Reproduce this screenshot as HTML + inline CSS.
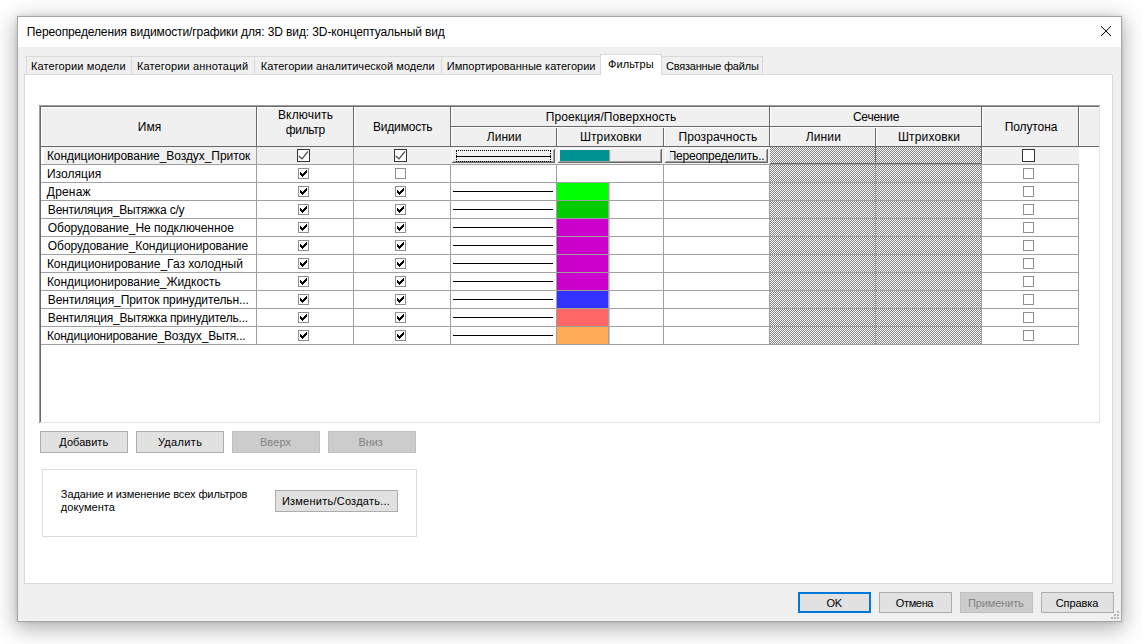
<!DOCTYPE html>
<html lang="ru"><head><meta charset="utf-8"><title>Переопределения видимости/графики</title>
<style>
html,body{margin:0;padding:0;background:#fff}
body{width:1143px;height:644px;position:relative;overflow:hidden;font-family:"Liberation Sans", sans-serif}
#w div,#w svg,#w span{position:absolute;display:block}
#w span{white-space:nowrap}
</style></head><body><div id="w">
<div style="left:17px;top:16px;width:1105px;height:606px;background:#f0f0f0;border:1px solid #a6a6a6;box-sizing:border-box;box-shadow:0 5px 20px 2px rgba(0,0,0,.30), 0 0 4px rgba(0,0,0,.12)"></div>
<div style="left:18px;top:17px;width:1103px;height:30px;background:#fff"></div>
<div style="left:24px;top:74px;width:1089px;height:510px;background:#fff;border:1px solid #d9d9d9;box-sizing:border-box"></div>
<div style="left:26px;top:56px;width:106px;height:18px;background:#f0f0f0;border:1px solid #d9d9d9;border-bottom:none;box-sizing:border-box"></div>
<div style="left:131px;top:56px;width:124px;height:18px;background:#f0f0f0;border:1px solid #d9d9d9;border-bottom:none;box-sizing:border-box"></div>
<div style="left:254px;top:56px;width:188px;height:18px;background:#f0f0f0;border:1px solid #d9d9d9;border-bottom:none;box-sizing:border-box"></div>
<div style="left:441px;top:56px;width:160px;height:18px;background:#f0f0f0;border:1px solid #d9d9d9;border-bottom:none;box-sizing:border-box"></div>
<div style="left:661px;top:56px;width:102px;height:18px;background:#f0f0f0;border:1px solid #d9d9d9;border-bottom:none;box-sizing:border-box"></div>
<div style="left:600px;top:54px;width:62px;height:21px;background:#fff;border:1px solid #d9d9d9;border-bottom:none;box-sizing:border-box"></div>
<div style="left:39px;top:105px;width:1061px;height:318px;background:#fff"></div>
<div style="left:39px;top:105px;width:1061px;height:1px;background:#a0a0a0"></div>
<div style="left:39px;top:105px;width:1px;height:318px;background:#a0a0a0"></div>
<div style="left:40px;top:106px;width:1059px;height:1px;background:#696969"></div>
<div style="left:40px;top:106px;width:1px;height:316px;background:#696969"></div>
<div style="left:40px;top:422px;width:1060px;height:1px;background:#e3e3e3"></div>
<div style="left:1099px;top:106px;width:1px;height:317px;background:#e3e3e3"></div>
<div style="left:41px;top:107px;width:1058px;height:39px;background:#f0f0f0"></div>
<div style="left:41px;top:107px;width:1058px;height:1px;background:#fff"></div>
<div style="left:41px;top:107px;width:1px;height:39px;background:#fff"></div>
<div style="left:41px;top:146px;width:1058px;height:1px;background:#696969"></div>
<div style="left:256px;top:107px;width:1px;height:40px;background:#696969"></div>
<div style="left:257px;top:108px;width:1px;height:38px;background:#fff"></div>
<div style="left:353px;top:107px;width:1px;height:40px;background:#696969"></div>
<div style="left:354px;top:108px;width:1px;height:38px;background:#fff"></div>
<div style="left:450px;top:107px;width:1px;height:40px;background:#696969"></div>
<div style="left:451px;top:108px;width:1px;height:38px;background:#fff"></div>
<div style="left:556px;top:127px;width:1px;height:20px;background:#696969"></div>
<div style="left:557px;top:127px;width:1px;height:19px;background:#fff"></div>
<div style="left:663px;top:127px;width:1px;height:20px;background:#696969"></div>
<div style="left:664px;top:127px;width:1px;height:19px;background:#fff"></div>
<div style="left:769px;top:107px;width:1px;height:40px;background:#696969"></div>
<div style="left:770px;top:108px;width:1px;height:38px;background:#fff"></div>
<div style="left:875px;top:127px;width:1px;height:20px;background:#696969"></div>
<div style="left:876px;top:127px;width:1px;height:19px;background:#fff"></div>
<div style="left:981px;top:107px;width:1px;height:40px;background:#696969"></div>
<div style="left:982px;top:108px;width:1px;height:38px;background:#fff"></div>
<div style="left:1078px;top:107px;width:1px;height:40px;background:#696969"></div>
<div style="left:1079px;top:108px;width:1px;height:38px;background:#fff"></div>
<div style="left:451px;top:126px;width:318px;height:1px;background:#696969"></div>
<div style="left:451px;top:127px;width:318px;height:1px;background:#fff"></div>
<div style="left:770px;top:126px;width:211px;height:1px;background:#696969"></div>
<div style="left:770px;top:127px;width:211px;height:1px;background:#fff"></div>
<div style="left:41px;top:164px;width:1038px;height:1px;background:#a0a0a0"></div>
<div style="left:41px;top:182px;width:1038px;height:1px;background:#a0a0a0"></div>
<div style="left:41px;top:200px;width:1038px;height:1px;background:#a0a0a0"></div>
<div style="left:41px;top:218px;width:1038px;height:1px;background:#a0a0a0"></div>
<div style="left:41px;top:236px;width:1038px;height:1px;background:#a0a0a0"></div>
<div style="left:41px;top:254px;width:1038px;height:1px;background:#a0a0a0"></div>
<div style="left:41px;top:272px;width:1038px;height:1px;background:#a0a0a0"></div>
<div style="left:41px;top:290px;width:1038px;height:1px;background:#a0a0a0"></div>
<div style="left:41px;top:308px;width:1038px;height:1px;background:#a0a0a0"></div>
<div style="left:41px;top:326px;width:1038px;height:1px;background:#a0a0a0"></div>
<div style="left:41px;top:344px;width:1038px;height:1px;background:#a0a0a0"></div>
<div style="left:256px;top:147px;width:1px;height:198px;background:#a0a0a0"></div>
<div style="left:353px;top:147px;width:1px;height:198px;background:#a0a0a0"></div>
<div style="left:450px;top:147px;width:1px;height:198px;background:#a0a0a0"></div>
<div style="left:556px;top:147px;width:1px;height:198px;background:#a0a0a0"></div>
<div style="left:663px;top:147px;width:1px;height:198px;background:#a0a0a0"></div>
<div style="left:769px;top:147px;width:1px;height:198px;background:#a0a0a0"></div>
<div style="left:875px;top:147px;width:1px;height:198px;background:#a0a0a0"></div>
<div style="left:981px;top:147px;width:1px;height:198px;background:#a0a0a0"></div>
<div style="left:1078px;top:147px;width:1px;height:198px;background:#a0a0a0"></div>
<div style="left:41px;top:147px;width:1038px;height:17px;background:#f0f0f0"></div>
<div style="left:256px;top:147px;width:1px;height:17px;background:#a0a0a0"></div>
<div style="left:353px;top:147px;width:1px;height:17px;background:#a0a0a0"></div>
<div style="left:41px;top:147px;width:3px;height:17px;background:#fff"></div>
<div style="left:770px;top:147px;width:211px;height:197px;background:#fff"></div>
<svg style="left:770px;top:147px" width="211" height="197"><defs><pattern id="ck" width="2" height="2" patternUnits="userSpaceOnUse"><rect width="2" height="2" fill="#fff"/><rect x="0" y="0" width="1" height="1" fill="#808080"/><rect x="1" y="1" width="1" height="1" fill="#808080"/></pattern></defs><rect width="211" height="197" fill="url(#ck)"/></svg>
<div style="left:770px;top:164px;width:212px;height:1px;background:#a0a0a0"></div>
<div style="left:770px;top:182px;width:212px;height:1px;background:#a0a0a0"></div>
<div style="left:770px;top:200px;width:212px;height:1px;background:#a0a0a0"></div>
<div style="left:770px;top:218px;width:212px;height:1px;background:#a0a0a0"></div>
<div style="left:770px;top:236px;width:212px;height:1px;background:#a0a0a0"></div>
<div style="left:770px;top:254px;width:212px;height:1px;background:#a0a0a0"></div>
<div style="left:770px;top:272px;width:212px;height:1px;background:#a0a0a0"></div>
<div style="left:770px;top:290px;width:212px;height:1px;background:#a0a0a0"></div>
<div style="left:770px;top:308px;width:212px;height:1px;background:#a0a0a0"></div>
<div style="left:770px;top:326px;width:212px;height:1px;background:#a0a0a0"></div>
<div style="left:770px;top:344px;width:212px;height:1px;background:#a0a0a0"></div>
<div style="left:875px;top:147px;width:1px;height:198px;background:#a0a0a0"></div>
<div style="left:875px;top:147px;width:1px;height:17px;background:#696969"></div>
<div style="left:981px;top:147px;width:1px;height:198px;background:#a0a0a0"></div>
<div style="left:981px;top:147px;width:1px;height:17px;background:#696969"></div>
<div style="left:770px;top:163px;width:212px;height:1px;background:#696969"></div>
<div style="left:982px;top:147px;width:1px;height:17px;background:#fff"></div>
<div style="left:557px;top:183px;width:51px;height:17px;background:#00ff00"></div>
<div style="left:608px;top:183px;width:1px;height:17px;background:#a0a0a0"></div>
<div style="left:609px;top:183px;width:1px;height:17px;background:#c8c8c8"></div>
<div style="left:557px;top:201px;width:51px;height:17px;background:#00cc00"></div>
<div style="left:608px;top:201px;width:1px;height:17px;background:#a0a0a0"></div>
<div style="left:609px;top:201px;width:1px;height:17px;background:#c8c8c8"></div>
<div style="left:557px;top:219px;width:51px;height:17px;background:#cc00cc"></div>
<div style="left:608px;top:219px;width:1px;height:17px;background:#a0a0a0"></div>
<div style="left:609px;top:219px;width:1px;height:17px;background:#c8c8c8"></div>
<div style="left:557px;top:237px;width:51px;height:17px;background:#cc00cc"></div>
<div style="left:608px;top:237px;width:1px;height:17px;background:#a0a0a0"></div>
<div style="left:609px;top:237px;width:1px;height:17px;background:#c8c8c8"></div>
<div style="left:557px;top:255px;width:51px;height:17px;background:#cc00cc"></div>
<div style="left:608px;top:255px;width:1px;height:17px;background:#a0a0a0"></div>
<div style="left:609px;top:255px;width:1px;height:17px;background:#c8c8c8"></div>
<div style="left:557px;top:273px;width:51px;height:17px;background:#cc00cc"></div>
<div style="left:608px;top:273px;width:1px;height:17px;background:#a0a0a0"></div>
<div style="left:609px;top:273px;width:1px;height:17px;background:#c8c8c8"></div>
<div style="left:557px;top:291px;width:51px;height:17px;background:#3333ff"></div>
<div style="left:608px;top:291px;width:1px;height:17px;background:#a0a0a0"></div>
<div style="left:609px;top:291px;width:1px;height:17px;background:#c8c8c8"></div>
<div style="left:557px;top:309px;width:51px;height:17px;background:#ff6666"></div>
<div style="left:608px;top:309px;width:1px;height:17px;background:#a0a0a0"></div>
<div style="left:609px;top:309px;width:1px;height:17px;background:#c8c8c8"></div>
<div style="left:557px;top:327px;width:51px;height:17px;background:#ffaa55"></div>
<div style="left:608px;top:327px;width:1px;height:17px;background:#a0a0a0"></div>
<div style="left:609px;top:327px;width:1px;height:17px;background:#c8c8c8"></div>
<div style="left:453px;top:191px;width:100px;height:1px;background:#000"></div>
<div style="left:453px;top:209px;width:100px;height:1px;background:#000"></div>
<div style="left:453px;top:227px;width:100px;height:1px;background:#000"></div>
<div style="left:453px;top:245px;width:100px;height:1px;background:#000"></div>
<div style="left:453px;top:263px;width:100px;height:1px;background:#000"></div>
<div style="left:453px;top:281px;width:100px;height:1px;background:#000"></div>
<div style="left:453px;top:299px;width:100px;height:1px;background:#000"></div>
<div style="left:453px;top:317px;width:100px;height:1px;background:#000"></div>
<div style="left:453px;top:335px;width:100px;height:1px;background:#000"></div>
<div style="left:452px;top:148px;width:103px;height:15px;background:#f0f0f0"></div>
<div style="left:452px;top:148px;width:103px;height:1px;background:#fff"></div>
<div style="left:452px;top:148px;width:1px;height:15px;background:#fff"></div>
<div style="left:453px;top:161px;width:101px;height:1px;background:#a0a0a0"></div>
<div style="left:553px;top:150px;width:1px;height:12px;background:#a0a0a0"></div>
<div style="left:452px;top:162px;width:103px;height:1px;background:#696969"></div>
<div style="left:554px;top:149px;width:1px;height:14px;background:#696969"></div>
<div style="left:558px;top:148px;width:104px;height:15px;background:#f0f0f0"></div>
<div style="left:558px;top:148px;width:104px;height:1px;background:#fff"></div>
<div style="left:558px;top:148px;width:1px;height:15px;background:#fff"></div>
<div style="left:559px;top:161px;width:102px;height:1px;background:#a0a0a0"></div>
<div style="left:660px;top:150px;width:1px;height:12px;background:#a0a0a0"></div>
<div style="left:558px;top:162px;width:104px;height:1px;background:#696969"></div>
<div style="left:661px;top:149px;width:1px;height:14px;background:#696969"></div>
<div style="left:665px;top:148px;width:103px;height:15px;background:#f0f0f0"></div>
<div style="left:665px;top:148px;width:103px;height:1px;background:#fff"></div>
<div style="left:665px;top:148px;width:1px;height:15px;background:#fff"></div>
<div style="left:666px;top:161px;width:101px;height:1px;background:#a0a0a0"></div>
<div style="left:766px;top:150px;width:1px;height:12px;background:#a0a0a0"></div>
<div style="left:665px;top:162px;width:103px;height:1px;background:#696969"></div>
<div style="left:767px;top:149px;width:1px;height:14px;background:#696969"></div>
<div style="left:456px;top:150px;width:95px;height:12px;border:1px dotted #000;box-sizing:border-box"></div>
<div style="left:456px;top:156px;width:95px;height:1px;background:#000"></div>
<div style="left:456px;top:155px;width:1px;height:3px;background:#000"></div>
<div style="left:550px;top:155px;width:1px;height:3px;background:#000"></div>
<div style="left:560px;top:150px;width:49px;height:11px;background:#009292"></div>
<div style="left:609px;top:150px;width:1px;height:11px;background:#a8a8a8"></div>
<div style="left:610px;top:150px;width:1px;height:11px;background:#dcdcdc"></div>
<svg style="left:297px;top:149px" width="13" height="13"><rect x=".5" y=".5" width="12" height="12" fill="#fff" stroke="#333"/><path d="M1.8 6.9 L5.1 9.9 L11 2.4" fill="none" stroke="#4a4a4a" stroke-width="1.3"/></svg>
<svg style="left:394px;top:149px" width="13" height="13"><rect x=".5" y=".5" width="12" height="12" fill="#fff" stroke="#333"/><path d="M1.8 6.9 L5.1 9.9 L11 2.4" fill="none" stroke="#4a4a4a" stroke-width="1.3"/></svg>
<svg style="left:1022px;top:149px" width="13" height="13"><rect x=".5" y=".5" width="12" height="12" fill="#fff" stroke="#333"/></svg>
<svg style="left:298px;top:168px" width="11" height="11"><rect x=".5" y=".5" width="10" height="10" fill="#fff" stroke="#8e8f8f"/><path d="M2 4h1v3h-1zM3 5h1v3h-1zM4 6h1v3h-1zM5 5h1v3h-1zM6 4h1v3h-1zM7 3h1v3h-1zM8 2h1v3h-1z" fill="#000" shape-rendering="crispEdges"/></svg>
<svg style="left:395px;top:168px" width="11" height="11"><rect x=".5" y=".5" width="10" height="10" fill="#fff" stroke="#8e8f8f"/></svg>
<svg style="left:1023px;top:168px" width="11" height="11"><rect x=".5" y=".5" width="10" height="10" fill="#fff" stroke="#8e8f8f"/></svg>
<svg style="left:298px;top:186px" width="11" height="11"><rect x=".5" y=".5" width="10" height="10" fill="#fff" stroke="#8e8f8f"/><path d="M2 4h1v3h-1zM3 5h1v3h-1zM4 6h1v3h-1zM5 5h1v3h-1zM6 4h1v3h-1zM7 3h1v3h-1zM8 2h1v3h-1z" fill="#000" shape-rendering="crispEdges"/></svg>
<svg style="left:395px;top:186px" width="11" height="11"><rect x=".5" y=".5" width="10" height="10" fill="#fff" stroke="#8e8f8f"/><path d="M2 4h1v3h-1zM3 5h1v3h-1zM4 6h1v3h-1zM5 5h1v3h-1zM6 4h1v3h-1zM7 3h1v3h-1zM8 2h1v3h-1z" fill="#000" shape-rendering="crispEdges"/></svg>
<svg style="left:1023px;top:186px" width="11" height="11"><rect x=".5" y=".5" width="10" height="10" fill="#fff" stroke="#8e8f8f"/></svg>
<svg style="left:298px;top:204px" width="11" height="11"><rect x=".5" y=".5" width="10" height="10" fill="#fff" stroke="#8e8f8f"/><path d="M2 4h1v3h-1zM3 5h1v3h-1zM4 6h1v3h-1zM5 5h1v3h-1zM6 4h1v3h-1zM7 3h1v3h-1zM8 2h1v3h-1z" fill="#000" shape-rendering="crispEdges"/></svg>
<svg style="left:395px;top:204px" width="11" height="11"><rect x=".5" y=".5" width="10" height="10" fill="#fff" stroke="#8e8f8f"/><path d="M2 4h1v3h-1zM3 5h1v3h-1zM4 6h1v3h-1zM5 5h1v3h-1zM6 4h1v3h-1zM7 3h1v3h-1zM8 2h1v3h-1z" fill="#000" shape-rendering="crispEdges"/></svg>
<svg style="left:1023px;top:204px" width="11" height="11"><rect x=".5" y=".5" width="10" height="10" fill="#fff" stroke="#8e8f8f"/></svg>
<svg style="left:298px;top:222px" width="11" height="11"><rect x=".5" y=".5" width="10" height="10" fill="#fff" stroke="#8e8f8f"/><path d="M2 4h1v3h-1zM3 5h1v3h-1zM4 6h1v3h-1zM5 5h1v3h-1zM6 4h1v3h-1zM7 3h1v3h-1zM8 2h1v3h-1z" fill="#000" shape-rendering="crispEdges"/></svg>
<svg style="left:395px;top:222px" width="11" height="11"><rect x=".5" y=".5" width="10" height="10" fill="#fff" stroke="#8e8f8f"/><path d="M2 4h1v3h-1zM3 5h1v3h-1zM4 6h1v3h-1zM5 5h1v3h-1zM6 4h1v3h-1zM7 3h1v3h-1zM8 2h1v3h-1z" fill="#000" shape-rendering="crispEdges"/></svg>
<svg style="left:1023px;top:222px" width="11" height="11"><rect x=".5" y=".5" width="10" height="10" fill="#fff" stroke="#8e8f8f"/></svg>
<svg style="left:298px;top:240px" width="11" height="11"><rect x=".5" y=".5" width="10" height="10" fill="#fff" stroke="#8e8f8f"/><path d="M2 4h1v3h-1zM3 5h1v3h-1zM4 6h1v3h-1zM5 5h1v3h-1zM6 4h1v3h-1zM7 3h1v3h-1zM8 2h1v3h-1z" fill="#000" shape-rendering="crispEdges"/></svg>
<svg style="left:395px;top:240px" width="11" height="11"><rect x=".5" y=".5" width="10" height="10" fill="#fff" stroke="#8e8f8f"/><path d="M2 4h1v3h-1zM3 5h1v3h-1zM4 6h1v3h-1zM5 5h1v3h-1zM6 4h1v3h-1zM7 3h1v3h-1zM8 2h1v3h-1z" fill="#000" shape-rendering="crispEdges"/></svg>
<svg style="left:1023px;top:240px" width="11" height="11"><rect x=".5" y=".5" width="10" height="10" fill="#fff" stroke="#8e8f8f"/></svg>
<svg style="left:298px;top:258px" width="11" height="11"><rect x=".5" y=".5" width="10" height="10" fill="#fff" stroke="#8e8f8f"/><path d="M2 4h1v3h-1zM3 5h1v3h-1zM4 6h1v3h-1zM5 5h1v3h-1zM6 4h1v3h-1zM7 3h1v3h-1zM8 2h1v3h-1z" fill="#000" shape-rendering="crispEdges"/></svg>
<svg style="left:395px;top:258px" width="11" height="11"><rect x=".5" y=".5" width="10" height="10" fill="#fff" stroke="#8e8f8f"/><path d="M2 4h1v3h-1zM3 5h1v3h-1zM4 6h1v3h-1zM5 5h1v3h-1zM6 4h1v3h-1zM7 3h1v3h-1zM8 2h1v3h-1z" fill="#000" shape-rendering="crispEdges"/></svg>
<svg style="left:1023px;top:258px" width="11" height="11"><rect x=".5" y=".5" width="10" height="10" fill="#fff" stroke="#8e8f8f"/></svg>
<svg style="left:298px;top:276px" width="11" height="11"><rect x=".5" y=".5" width="10" height="10" fill="#fff" stroke="#8e8f8f"/><path d="M2 4h1v3h-1zM3 5h1v3h-1zM4 6h1v3h-1zM5 5h1v3h-1zM6 4h1v3h-1zM7 3h1v3h-1zM8 2h1v3h-1z" fill="#000" shape-rendering="crispEdges"/></svg>
<svg style="left:395px;top:276px" width="11" height="11"><rect x=".5" y=".5" width="10" height="10" fill="#fff" stroke="#8e8f8f"/><path d="M2 4h1v3h-1zM3 5h1v3h-1zM4 6h1v3h-1zM5 5h1v3h-1zM6 4h1v3h-1zM7 3h1v3h-1zM8 2h1v3h-1z" fill="#000" shape-rendering="crispEdges"/></svg>
<svg style="left:1023px;top:276px" width="11" height="11"><rect x=".5" y=".5" width="10" height="10" fill="#fff" stroke="#8e8f8f"/></svg>
<svg style="left:298px;top:294px" width="11" height="11"><rect x=".5" y=".5" width="10" height="10" fill="#fff" stroke="#8e8f8f"/><path d="M2 4h1v3h-1zM3 5h1v3h-1zM4 6h1v3h-1zM5 5h1v3h-1zM6 4h1v3h-1zM7 3h1v3h-1zM8 2h1v3h-1z" fill="#000" shape-rendering="crispEdges"/></svg>
<svg style="left:395px;top:294px" width="11" height="11"><rect x=".5" y=".5" width="10" height="10" fill="#fff" stroke="#8e8f8f"/><path d="M2 4h1v3h-1zM3 5h1v3h-1zM4 6h1v3h-1zM5 5h1v3h-1zM6 4h1v3h-1zM7 3h1v3h-1zM8 2h1v3h-1z" fill="#000" shape-rendering="crispEdges"/></svg>
<svg style="left:1023px;top:294px" width="11" height="11"><rect x=".5" y=".5" width="10" height="10" fill="#fff" stroke="#8e8f8f"/></svg>
<svg style="left:298px;top:312px" width="11" height="11"><rect x=".5" y=".5" width="10" height="10" fill="#fff" stroke="#8e8f8f"/><path d="M2 4h1v3h-1zM3 5h1v3h-1zM4 6h1v3h-1zM5 5h1v3h-1zM6 4h1v3h-1zM7 3h1v3h-1zM8 2h1v3h-1z" fill="#000" shape-rendering="crispEdges"/></svg>
<svg style="left:395px;top:312px" width="11" height="11"><rect x=".5" y=".5" width="10" height="10" fill="#fff" stroke="#8e8f8f"/><path d="M2 4h1v3h-1zM3 5h1v3h-1zM4 6h1v3h-1zM5 5h1v3h-1zM6 4h1v3h-1zM7 3h1v3h-1zM8 2h1v3h-1z" fill="#000" shape-rendering="crispEdges"/></svg>
<svg style="left:1023px;top:312px" width="11" height="11"><rect x=".5" y=".5" width="10" height="10" fill="#fff" stroke="#8e8f8f"/></svg>
<svg style="left:298px;top:330px" width="11" height="11"><rect x=".5" y=".5" width="10" height="10" fill="#fff" stroke="#8e8f8f"/><path d="M2 4h1v3h-1zM3 5h1v3h-1zM4 6h1v3h-1zM5 5h1v3h-1zM6 4h1v3h-1zM7 3h1v3h-1zM8 2h1v3h-1z" fill="#000" shape-rendering="crispEdges"/></svg>
<svg style="left:395px;top:330px" width="11" height="11"><rect x=".5" y=".5" width="10" height="10" fill="#fff" stroke="#8e8f8f"/><path d="M2 4h1v3h-1zM3 5h1v3h-1zM4 6h1v3h-1zM5 5h1v3h-1zM6 4h1v3h-1zM7 3h1v3h-1zM8 2h1v3h-1z" fill="#000" shape-rendering="crispEdges"/></svg>
<svg style="left:1023px;top:330px" width="11" height="11"><rect x=".5" y=".5" width="10" height="10" fill="#fff" stroke="#8e8f8f"/></svg>
<div style="left:40px;top:431px;width:88px;height:22px;background:#e1e1e1;border:1px solid #adadad;box-sizing:border-box"></div>
<div style="left:136px;top:431px;width:88px;height:22px;background:#e1e1e1;border:1px solid #adadad;box-sizing:border-box"></div>
<div style="left:232px;top:431px;width:88px;height:22px;background:#ccc;border:1px solid #bfbfbf;box-sizing:border-box"></div>
<div style="left:328px;top:431px;width:88px;height:22px;background:#ccc;border:1px solid #bfbfbf;box-sizing:border-box"></div>
<div style="left:42px;top:469px;width:375px;height:68px;border:1px solid #dcdcdc;box-sizing:border-box"></div>
<div style="left:275px;top:490px;width:123px;height:22px;background:#e1e1e1;border:1px solid #adadad;box-sizing:border-box"></div>
<div style="left:798px;top:592px;width:73px;height:21px;background:#e1e1e1;border:2px solid #0078d7;box-sizing:border-box"></div>
<div style="left:879px;top:592px;width:73px;height:21px;background:#e1e1e1;border:1px solid #adadad;box-sizing:border-box"></div>
<div style="left:960px;top:592px;width:73px;height:21px;background:#ccc;border:1px solid #bfbfbf;box-sizing:border-box"></div>
<div style="left:1041px;top:592px;width:73px;height:21px;background:#e1e1e1;border:1px solid #adadad;box-sizing:border-box"></div>
<svg style="left:1100px;top:25px" width="12" height="12"><path d="M1 1.2 L11 11 M11 1.2 L1 11" stroke="#000" stroke-width="1" fill="none"/></svg>
<div style="left:1117px;top:611px;width:2px;height:2px;background:#b8b8b8"></div>
<div style="left:1114px;top:614px;width:2px;height:2px;background:#b8b8b8"></div>
<div style="left:1117px;top:614px;width:2px;height:2px;background:#b8b8b8"></div>
<div style="left:1111px;top:617px;width:2px;height:2px;background:#b8b8b8"></div>
<div style="left:1114px;top:617px;width:2px;height:2px;background:#b8b8b8"></div>
<div style="left:1117px;top:617px;width:2px;height:2px;background:#b8b8b8"></div>
<span id="t0" style="left:26.85px;top:26px;font-size:12px;line-height:12px;color:#000;letter-spacing:-0.107px">Переопределения видимости/графики для: 3D вид: 3D-концептуальный вид</span>
<span id="t1" style="left:30.90px;top:61px;font-size:11px;line-height:11px;color:#000;letter-spacing:0.120px">Категории модели</span>
<span id="t2" style="left:136.90px;top:61px;font-size:11px;line-height:11px;color:#000;letter-spacing:0.150px">Категории аннотаций</span>
<span id="t3" style="left:260.85px;top:61px;font-size:11px;line-height:11px;color:#000;letter-spacing:0.047px">Категории аналитической модели</span>
<span id="t4" style="left:446.85px;top:61px;font-size:11px;line-height:11px;color:#000;letter-spacing:0.019px">Импортированные категории</span>
<span id="t5" style="left:607.90px;top:59px;font-size:11px;line-height:11px;color:#000;letter-spacing:0.150px">Фильтры</span>
<span id="t6" style="left:665.90px;top:61px;font-size:11px;line-height:11px;color:#000;letter-spacing:-0.193px">Связанные файлы</span>
<span id="t7" style="left:137.85px;top:121px;font-size:12px;line-height:12px;color:#000;letter-spacing:-0.000px">Имя</span>
<span id="t8" style="left:277.90px;top:109px;font-size:12px;line-height:12px;color:#000;letter-spacing:0.193px">Включить</span>
<span id="t9" style="left:285.80px;top:124px;font-size:12px;line-height:12px;color:#000;letter-spacing:-0.360px">фильтр</span>
<span id="t10" style="left:372.90px;top:121px;font-size:12px;line-height:12px;color:#000;letter-spacing:-0.169px">Видимость</span>
<span id="t11" style="left:545.85px;top:111px;font-size:12px;line-height:12px;color:#000;letter-spacing:0.071px">Проекция/Поверхность</span>
<span id="t12" style="left:486.80px;top:131px;font-size:12px;line-height:12px;color:#000;letter-spacing:-0.000px">Линии</span>
<span id="t13" style="left:579.90px;top:131px;font-size:12px;line-height:12px;color:#000;letter-spacing:0.113px">Штриховки</span>
<span id="t14" style="left:678.42px;top:131px;font-size:12px;line-height:12px;color:#000;letter-spacing:0.102px">Прозрачность</span>
<span id="t15" style="left:852.90px;top:111px;font-size:12px;line-height:12px;color:#000;letter-spacing:-0.225px">Сечение</span>
<span id="t16" style="left:805.80px;top:131px;font-size:12px;line-height:12px;color:#000;letter-spacing:0.113px">Линии</span>
<span id="t17" style="left:897.90px;top:131px;font-size:12px;line-height:12px;color:#000;letter-spacing:0.169px">Штриховки</span>
<span id="t18" style="left:1004.85px;top:121px;font-size:12px;line-height:12px;color:#000;letter-spacing:-0.129px">Полутона</span>
<span id="t19" style="left:46.90px;top:150px;font-size:12px;line-height:12px;color:#000;letter-spacing:-0.060px">Кондиционирование_Воздух_Приток</span>
<span id="t20" style="left:46.90px;top:168px;font-size:12px;line-height:12px;color:#000;letter-spacing:0.064px">Изоляция</span>
<span id="t21" style="left:46.85px;top:186px;font-size:12px;line-height:12px;color:#000;letter-spacing:0.180px">Дренаж</span>
<span id="t22" style="left:47.85px;top:204px;font-size:12px;line-height:12px;color:#000;letter-spacing:-0.214px">Вентиляция_Вытяжка с/у</span>
<span id="t23" style="left:47.85px;top:222px;font-size:12px;line-height:12px;color:#000;letter-spacing:-0.058px">Оборудование_Не подключенное</span>
<span id="t24" style="left:47.85px;top:240px;font-size:12px;line-height:12px;color:#000;letter-spacing:-0.062px">Оборудование_Кондиционирование</span>
<span id="t25" style="left:46.90px;top:258px;font-size:12px;line-height:12px;color:#000;letter-spacing:-0.016px">Кондиционирование_Газ холодный</span>
<span id="t26" style="left:46.90px;top:276px;font-size:12px;line-height:12px;color:#000;letter-spacing:-0.054px">Кондиционирование_Жидкость</span>
<span id="t27" style="left:47.85px;top:294px;font-size:12px;line-height:12px;color:#000;letter-spacing:-0.084px">Вентиляция_Приток принудительн...</span>
<span id="t28" style="left:47.85px;top:312px;font-size:12px;line-height:12px;color:#000;letter-spacing:-0.197px">Вентиляция_Вытяжка принудитель...</span>
<span id="t29" style="left:46.90px;top:330px;font-size:12px;line-height:12px;color:#000;letter-spacing:-0.189px">Кондиционирование_Воздух_Вытя...</span>
<span id="t30" style="left:59.32px;top:437px;font-size:11px;line-height:11px;color:#000;letter-spacing:0.032px">Добавить</span>
<span id="t31" style="left:157.90px;top:437px;font-size:11px;line-height:11px;color:#000;letter-spacing:0.337px">Удалить</span>
<span id="t32" style="left:259.90px;top:437px;font-size:11px;line-height:11px;color:#838383;letter-spacing:0.112px">Вверх</span>
<span id="t33" style="left:358.43px;top:437px;font-size:11px;line-height:11px;color:#838383;letter-spacing:-0.075px">Вниз</span>
<span id="t34" style="left:60.85px;top:489px;font-size:11px;line-height:11px;color:#000;letter-spacing:-0.098px">Задание и изменение всех фильтров</span>
<span id="t35" style="left:60.85px;top:502px;font-size:11px;line-height:11px;color:#000;letter-spacing:0.056px">документа</span>
<span id="t36" style="left:281.90px;top:496px;font-size:11px;line-height:11px;color:#000;letter-spacing:0.237px">Изменить/Создать...</span>
<span id="t37" style="left:826.40px;top:598px;font-size:11px;line-height:11px;color:#000;letter-spacing:-0.225px">OK</span>
<span id="t38" style="left:895.80px;top:598px;font-size:11px;line-height:11px;color:#000;letter-spacing:-0.360px">Отмена</span>
<span id="t39" style="left:967.90px;top:598px;font-size:11px;line-height:11px;color:#838383;letter-spacing:-0.112px">Применить</span>
<span id="t40" style="left:1055.65px;top:598px;font-size:11px;line-height:11px;color:#000;letter-spacing:-0.075px">Справка</span>
<div class="clip" style="left:670px;top:150px;width:96px;height:15px;overflow:hidden"><span id="t41" style="left:-2.35px;top:0;font-size:12px;line-height:12px;color:#000;letter-spacing:-0.225px">Переопределить..</span></div>
</div></body></html>
